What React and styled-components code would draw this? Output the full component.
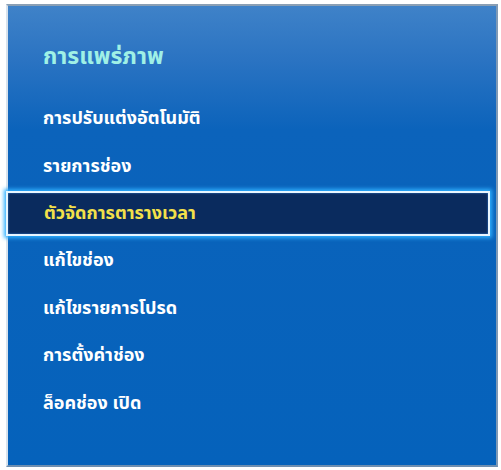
import React from "react";
import styled, { createGlobalStyle } from "styled-components";

const Global = createGlobalStyle`
  html, body { margin: 0; padding: 0; background: #ffffff; }
  body { width: 501px; height: 470px; overflow: hidden; font-family: "Noto Sans Thai", "Noto Sans", "DejaVu Sans", sans-serif; }
`;

const Frame = styled.div`
  box-sizing: border-box;
  margin: 4px 3px 3px 6px;
  width: 492px;
  height: 463px;
  border-top: 2px solid #8a9fb4;
  border-left: 2px solid #d8e2ec;
  border-right: 2px solid #7f9ab6;
  border-bottom: 2px solid #6f8fb0;
  background: linear-gradient(180deg, #3f82c8 0%, #2a73c2 12%, #0b63bb 27%, #0562bb 100%);
  display: flex;
  flex-direction: column;
  padding: 34px 0 0 0;
`;

const Title = styled.div`
  padding-left: 35px;
  color: #9ff0e6;
  font-size: 23px;
  font-weight: 700;
  line-height: 34px;
  height: 34px;
  margin-bottom: 21px;
`;

const List = styled.div`
  display: flex;
  flex-direction: column;
`;

const Item = styled.div`
  box-sizing: border-box;
  height: 47.4px;
  padding-left: 35px;
  display: flex;
  align-items: center;
  color: ${(p) => (p.$active ? "#f3e04a" : "#ffffff")};
  font-size: 18px;
  font-weight: 700;
  ${(p) =>
    p.$active &&
    `
    margin: 1px 6px 1px -2px;
    padding-left: 36px;
    height: 45.4px;
    background: #0a2b5e;
    border: 2px solid #e8f6ff;
    box-shadow: 0 0 4px 2px #2fb0ff, inset 0 0 2px #3a8adf;
  `}
`;

const items = [
  "การปรับแต่งอัตโนมัติ",
  "รายการช่อง",
  "ตัวจัดการตารางเวลา",
  "แก้ไขช่อง",
  "แก้ไขรายการโปรด",
  "การตั้งค่าช่อง",
  "ล็อคช่อง เปิด",
];

export default function App() {
  return (
    <>
      <Global />
      <Frame>
        <Title>การแพร่ภาพ</Title>
        <List>
          {items.map((t, i) => (
            <Item key={t} $active={i === 2}>
              {t}
            </Item>
          ))}
        </List>
      </Frame>
    </>
  );
}
